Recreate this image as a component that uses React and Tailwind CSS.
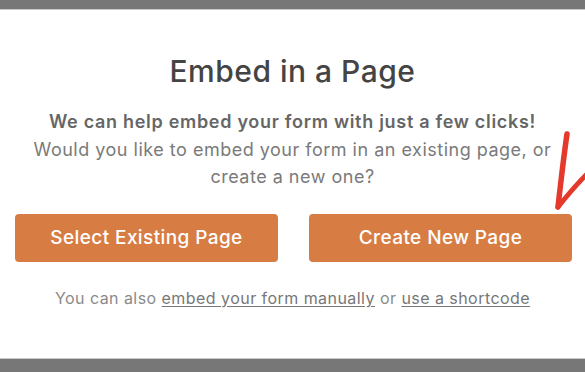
export default function App() {
  return (
    <div className="relative w-[585px] h-[372px] bg-white overflow-hidden flex flex-col" style={{ fontFamily: 'Inter, "Noto Sans", sans-serif' }}>
      <div className="h-[10px] bg-[#777777] border-b border-[#c8c8c8] shrink-0" />
      <div className="flex-1 flex flex-col items-center">
        <h1 className="mt-[43px] text-[30px] leading-[36px] font-medium text-[#444444] tracking-[0.5px]">Embed in a Page</h1>
        <p className="mt-[19px] text-[18px] leading-[28px] font-semibold text-[#666666] text-center tracking-[0.7px] whitespace-nowrap">We can help embed your form with just a few clicks!</p>
        <p className="text-[18px] leading-[27px] text-[#7a7a7a] text-center w-[540px] tracking-[0.5px]">Would you like to embed your form in an existing page, or create a new one?</p>
        <div className="mt-[24px] w-full grid grid-cols-2 gap-[31px] pl-[15px] pr-[13px]">
          <button className="h-[48px] rounded-[4px] bg-[#d77c43] text-white text-[19px] font-medium tracking-[0.4px]">Select Existing Page</button>
          <button className="h-[48px] rounded-[4px] bg-[#d77c43] text-white text-[19px] font-medium tracking-[0.4px]">Create New Page</button>
        </div>
        <p className="mt-[25px] text-[16px] leading-[22px] text-[#8a8a8a] tracking-[0.45px] whitespace-nowrap">
          You can also <span className="underline underline-offset-2 text-[#777777]">embed your form manually</span> or <span className="underline underline-offset-2 text-[#777777]">use a shortcode</span>
        </p>
      </div>
      <div className="h-[14px] bg-[#777777] border-t border-[#c8c8c8] shrink-0" />
      <svg className="absolute left-0 top-0 pointer-events-none" width="585" height="372" viewBox="0 0 585 372">
        <path d="M567 134 C564 155 561 180 558 207" stroke="#e4392b" strokeWidth="5.5" fill="none" strokeLinecap="round" />
        <path d="M587 174 C576 185 566 197 558 207" stroke="#e4392b" strokeWidth="5" fill="none" strokeLinecap="round" />
      </svg>
    </div>
  );
}
